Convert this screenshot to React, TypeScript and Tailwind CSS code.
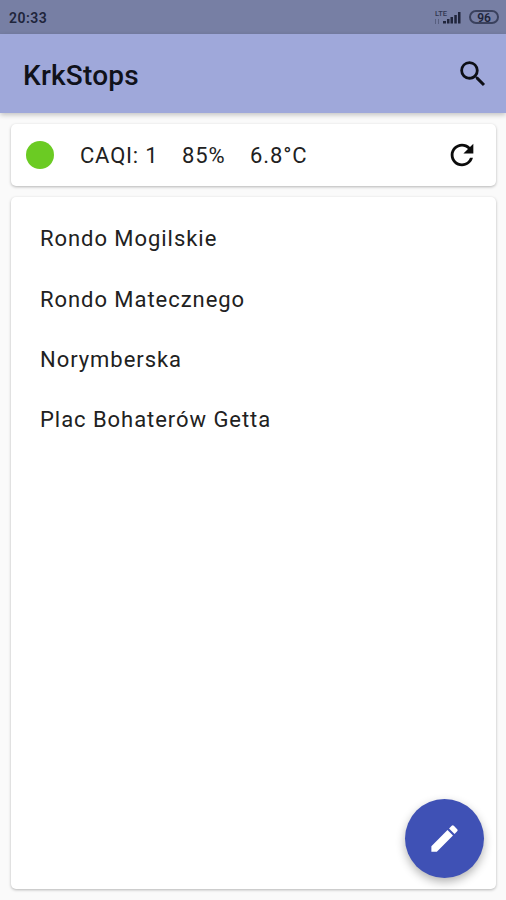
import { MdEdit, MdRefresh, MdSearch } from "react-icons/md"

const stops = ["Rondo Mogilskie", "Rondo Matecznego", "Norymberska", "Plac Bohaterów Getta"]

function StatusBar() {
  return (
    <div className="flex h-[34px] items-center justify-between bg-[#777fa4] pl-[9px] pr-[7px] text-[#20253b]">
      <span className="text-[14px] font-semibold leading-none tracking-[0.5px] pt-px">20:33</span>
      <div className="flex items-center gap-[7px]">
        <svg width="28" height="18" viewBox="0 0 28 18" fill="currentColor">
          <text x="1" y="7.500" fontSize="7" fontWeight="500" textLength="12" lengthAdjust="spacingAndGlyphs" opacity="0.8">LTE</text>
          <path d="M1 11h1v5H1zM4 11h1v5H4z" opacity="0.35" />
          <path d="M9 13h3v2.500H9zM13 11h2.500v4.500H13zM16.500 9h2.500v6.500h-2.500zM20.300 7h2.500v8.500h-2.500zM24 4h2.500v11.500H24z" />
        </svg>
        <div className="flex h-[14px] w-[30px] items-center justify-center rounded-full border-2 border-[#3a415d]">
          <span className="pt-px text-[12px] font-semibold leading-none">96</span>
        </div>
      </div>
    </div>
  )
}

function AppBar() {
  return (
    <header className="relative flex h-[79px] items-center justify-between bg-[#9fa8da] pl-[23px] pr-[16px] shadow-[0_2px_5px_rgba(0,0,0,0.22)]">
      <h1 className="pt-[4px] text-[28px] font-medium leading-none tracking-[0.2px] text-[#10121a]">KrkStops</h1>
      <button aria-label="Search">
        <MdSearch className="size-[34px] text-[#0d0f16]" />
      </button>
    </header>
  )
}

function AirCard() {
  return (
    <section className="flex h-[62px] items-center rounded-[5px] bg-white pl-[15px] pr-[17px] text-[22px] tracking-[0.9px] shadow-[0_1px_3px_rgba(0,0,0,0.28)]">
      <span className="size-7 rounded-full bg-[#6bcb23]" />
      <span className="ml-[26px] w-[102px] tracking-[0.8px]">CAQI: 1</span>
      <span className="w-[68px]">85%</span>
      <span>6.8°C</span>
      <button aria-label="Refresh" className="ml-auto">
        <MdRefresh className="size-[34px] text-[#0c0c0c]" />
      </button>
    </section>
  )
}

export default function App() {
  return (
    <div className="relative flex h-[900px] w-full flex-col overflow-hidden bg-[#fafafa] font-['Roboto','Noto_Sans',sans-serif] text-[#212121]">
      <StatusBar />
      <AppBar />
      <main className="flex flex-1 flex-col gap-[11px] pt-[11px] pr-[10px] pb-[11px] pl-[11px]">
        <AirCard />
        <ul className="flex-1 rounded-[5px] bg-white pt-[11.5px] pl-[29px] shadow-[0_1px_3px_rgba(0,0,0,0.28)]">
          {stops.map((stop) => (
            <li key={stop} className="flex h-[60.4px] items-center text-[22px] tracking-[0.95px]">
              {stop}
            </li>
          ))}
        </ul>
      </main>
      <button
        aria-label="Edit"
        className="absolute right-[22px] bottom-[22px] flex size-[79px] items-center justify-center rounded-full bg-[#3f51b5] text-white shadow-[0_4px_10px_rgba(0,0,0,0.3)]"
      >
        <MdEdit className="size-[35px]" />
      </button>
    </div>
  )
}
